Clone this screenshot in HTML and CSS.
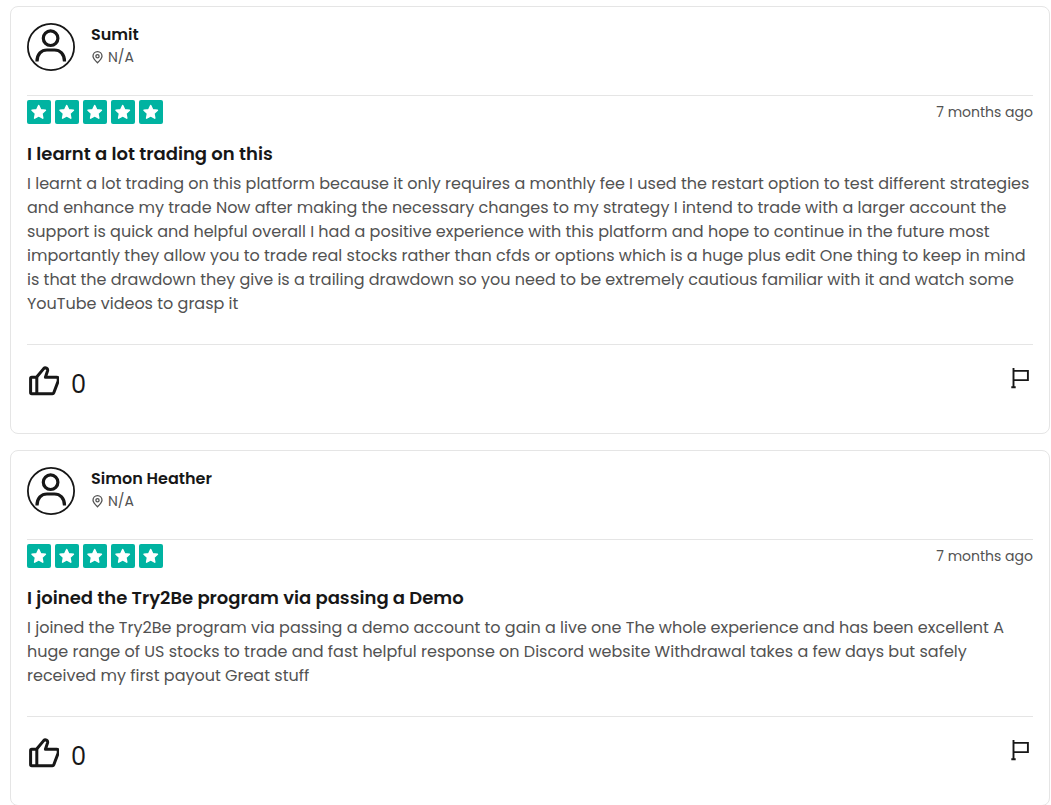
FILE: index.html
```html
<!DOCTYPE html>
<html lang="en">
<head>
<meta charset="utf-8">
<meta name="viewport" content="width=device-width, initial-scale=1">
<title>Reviews</title>
<link rel="stylesheet" href="styles.css">
</head>
<body>
<svg class="sprite" aria-hidden="true">
  <symbol id="user" viewBox="0 0 48 48"><circle cx="24" cy="24" r="23.1" fill="none" stroke="currentColor" stroke-width="1.8"/><g fill="none" stroke="currentColor" stroke-width="3.200"><circle cx="23.6" cy="15.2" r="7.3"/><path d="M10 38.5c0-7.500 4.500-11.500 10-11.500h7.500c5.500 0 10 4 10 11.500"/></g></symbol>
  <symbol id="pin" viewBox="0 0 12 14"><g fill="none" stroke="currentColor" stroke-width="1.300"><path d="M6.500 11.800C4.200 9.500 2 7.300 2 5.200a4.500 4.500 0 0 1 9 0C11 7.300 8.800 9.500 6.500 11.800z"/><circle cx="6.500" cy="5.200" r="1.600"/></g></symbol>
  <symbol id="star" viewBox="0 0 24 24"><path fill="#fff" stroke="#fff" stroke-width="1.500" stroke-linejoin="round" d="M11.700 5.500l2 4.200 4.700.6-3.500 3.200.9 4.700-4.100-2.300-4.100 2.300.9-4.700L5 10.300l4.700-.6z"/></symbol>
  <symbol id="thumb" viewBox="0 0 32 32"><g fill="none" stroke="currentColor" stroke-width="3" stroke-linejoin="round"><path d="M9.500 12.300H4.800a1.200 1.200 0 0 0-1.200 1.200v14a1.200 1.200 0 0 0 1.200 1.200h20.600a1.500 1.500 0 0 0 1.400-1l4.400-11.700v-2.200a1.500 1.500 0 0 0-1.500-1.500H18.400l2.200-6.600a2.300 2.300 0 0 0-3.900-2.100L9.500 12.300z"/><path d="M9.800 12.300v16.400"/></g></symbol>
  <symbol id="flag" viewBox="0 0 24 24"><path fill="none" stroke="currentColor" stroke-width="1.900" d="M4.500 2v19M2.300 21.200h4.400M4.500 4.900h14.400v9.200H4.500"/></symbol>
</svg>
<main class="reviews">
  <article class="card">
    <header class="author">
      <svg class="avatar" aria-hidden="true"><use href="#user"/></svg>
      <div>
        <h2 class="name">Sumit</h2>
        <p class="place"><svg class="pin" aria-hidden="true"><use href="#pin"/></svg>N/A</p>
      </div>
    </header>
    <div class="rating">
      <div class="stars" role="img" aria-label="5 out of 5 stars"><svg class="star"><use href="#star"/></svg><svg class="star"><use href="#star"/></svg><svg class="star"><use href="#star"/></svg><svg class="star"><use href="#star"/></svg><svg class="star"><use href="#star"/></svg></div>
      <time class="date">7 months ago</time>
    </div>
    <h3 class="title">I learnt a lot trading on this</h3>
    <p class="text">I learnt a lot trading on this platform because it only requires a monthly fee I used the restart option to test different strategies and enhance my trade Now after making the necessary changes to my strategy I intend to trade with a larger account the support is quick and helpful overall I had a positive experience with this platform and hope to continue in the future most importantly they allow you to trade real stocks rather than cfds or options which is a huge plus edit One thing to keep in mind is that the drawdown they give is a trailing drawdown so you need to be extremely cautious familiar with it and watch some YouTube videos to grasp it</p>
    <footer class="actions">
      <button class="like" type="button" aria-label="Like"><svg class="thumb" aria-hidden="true"><use href="#thumb"/></svg><span class="count">0</span></button>
      <button class="report" type="button" aria-label="Report"><svg class="flag" aria-hidden="true"><use href="#flag"/></svg></button>
    </footer>
  </article>
  <article class="card">
    <header class="author">
      <svg class="avatar" aria-hidden="true"><use href="#user"/></svg>
      <div>
        <h2 class="name">Simon Heather</h2>
        <p class="place"><svg class="pin" aria-hidden="true"><use href="#pin"/></svg>N/A</p>
      </div>
    </header>
    <div class="rating">
      <div class="stars" role="img" aria-label="5 out of 5 stars"><svg class="star"><use href="#star"/></svg><svg class="star"><use href="#star"/></svg><svg class="star"><use href="#star"/></svg><svg class="star"><use href="#star"/></svg><svg class="star"><use href="#star"/></svg></div>
      <time class="date">7 months ago</time>
    </div>
    <h3 class="title">I joined the Try2Be program via passing a Demo</h3>
    <p class="text">I joined the Try2Be program via passing a demo account to gain a live one The whole experience and has been excellent A huge range of US stocks to trade and fast helpful response on Discord website Withdrawal takes a few days but safely received my first payout Great stuff</p>
    <footer class="actions">
      <button class="like" type="button" aria-label="Like"><svg class="thumb" aria-hidden="true"><use href="#thumb"/></svg><span class="count">0</span></button>
      <button class="report" type="button" aria-label="Report"><svg class="flag" aria-hidden="true"><use href="#flag"/></svg></button>
    </footer>
  </article>
</main>
</body>
</html>
```

FILE: styles.css
```css
* { box-sizing: border-box; }
html { scrollbar-width: none; }
body {
  margin: 0;
  background: #fff;
  color: #171717;
  font-family: Poppins, Inter, "Open Sans", sans-serif;
  font-size: 16px;
  line-height: 24px;
}
h2, h3, p { margin: 0; }
svg { display: block; flex: none; }
button {
  padding: 0;
  border: 0;
  background: none;
  color: inherit;
  font: inherit;
  cursor: pointer;
}
.sprite { position: absolute; width: 0; height: 0; }
.reviews {
  display: flex;
  flex-direction: column;
  gap: 16px;
  padding: 6px 1px 0 10px;
}
.card {
  padding: 16px;
  border: 1px solid #e5e5e5;
  border-radius: 8px;
}
.author {
  display: flex;
  gap: 16px;
  padding-bottom: 24px;
  border-bottom: 1px solid #e5e5e5;
}
.avatar { width: 48px; height: 48px; }
.name { font-size: 16px; line-height: 24px; font-weight: 600; }
.place {
  display: flex;
  align-items: center;
  gap: 5px;
  font-size: 14px;
  line-height: 21px;
  color: #525252;
}
.pin { width: 12px; height: 14px; }
.rating {
  display: flex;
  justify-content: space-between;
  align-items: center;
  padding-top: 4px;
}
.stars { display: flex; gap: 4px; }
.star { width: 24px; height: 24px; border-radius: 2px; background: #00b3a1; }
.date { font-size: 14px; color: #525252; }
.title {
  margin-top: 16px;
  font-size: 18px;
  line-height: 28px;
  font-weight: 600;
}
.text { margin-top: 4px; color: #525252; }
.actions {
  display: flex;
  justify-content: space-between;
  align-items: flex-start;
  margin-top: 28px;
  padding: 20px 0 16px;
  border-top: 1px solid #e5e5e5;
}
.like { display: flex; align-items: flex-start; gap: 12px; }
.thumb { width: 32px; height: 32px; }
.count { padding-top: 4px; font-size: 24px; line-height: 32px; }
.report { padding-top: 1px; }
.flag { width: 24px; height: 24px; }
```
